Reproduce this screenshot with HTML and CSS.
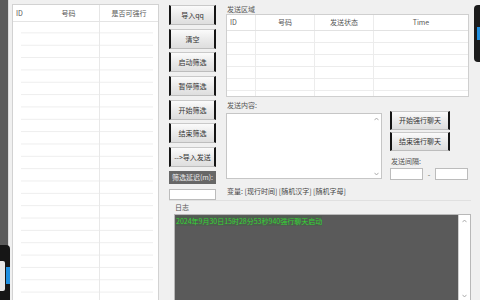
FILE: index.html
```html
<!DOCTYPE html>
<html lang="zh-CN">
<head>
<meta charset="utf-8">
<title>强行聊天</title>
<link rel="stylesheet" href="styles.css">
</head>
<body>
<div class="desk"></div>
<div class="win">
  <div class="list">
    <div class="list-head">
      <div class="lh lh-id">ID</div>
      <div class="lh lh-num">号码</div>
      <div class="lh lh-ok">是否可强行</div>
    </div>
    <div class="list-body"></div>
  </div>
  <div class="main">
    <div class="top">
      <div class="btns">
        <div class="btn">导入qq</div>
        <div class="btn">清空</div>
        <div class="btn">启动筛选</div>
        <div class="btn">暂停筛选</div>
        <div class="btn">开始筛选</div>
        <div class="btn">结束筛选</div>
        <div class="btn">--&gt;导入发送</div>
        <div class="delay-label">筛选延迟(m):</div>
        <div class="input delay-input"></div>
      </div>
      <div class="send">
        <div class="label">发送区域</div>
        <div class="stable">
          <div class="srow shead">
            <div class="sc sc-id">ID</div>
            <div class="sc">号码</div>
            <div class="sc">发送状态</div>
            <div class="sc">Time</div>
          </div>
          <div class="srow"><div class="sc"></div><div class="sc"></div><div class="sc"></div><div class="sc"></div></div>
          <div class="srow"><div class="sc"></div><div class="sc"></div><div class="sc"></div><div class="sc"></div></div>
          <div class="srow"><div class="sc"></div><div class="sc"></div><div class="sc"></div><div class="sc"></div></div>
          <div class="srow"><div class="sc"></div><div class="sc"></div><div class="sc"></div><div class="sc"></div></div>
          <div class="srow"><div class="sc"></div><div class="sc"></div><div class="sc"></div><div class="sc"></div></div>
          <div class="srow srow-last"><div class="sc"></div><div class="sc"></div><div class="sc"></div><div class="sc"></div></div>
        </div>
        <div class="label label-content">发送内容:</div>
        <div class="content-row">
          <div class="textbox">
            <div class="tb-text"></div>
            <div class="tb-scroll">
              <svg class="arr" width="5" height="4" viewBox="0 0 5 4"><path d="M0.5 3.2 L2.5 1 L4.5 3.2" fill="none" stroke="#9a9a9a" stroke-width="0.8"/></svg>
              <svg class="arr" width="5" height="4" viewBox="0 0 5 4"><path d="M0.5 0.8 L2.5 3 L4.5 0.8" fill="none" stroke="#9a9a9a" stroke-width="0.8"/></svg>
            </div>
          </div>
          <div class="side">
            <div class="btn btn-wide">开始强行聊天</div>
            <div class="btn btn-wide">结束强行聊天</div>
            <div class="label label-interval">发送间隔:</div>
            <div class="interval">
              <div class="input int-input"></div>
              <span class="dash">-</span>
              <div class="input int-input"></div>
            </div>
          </div>
        </div>
        <div class="vars">变量: [现行时间] [随机汉字] [随机字母]</div>
      </div>
    </div>
    <div class="log">
      <div class="log-label">日志</div>
      <div class="log-box">
        <div class="log-text"><span class="log-line">2024年9月30日15时28分53秒940强行聊天启动</span></div>
        <div class="log-scroll">
          <svg class="arr" width="5" height="4" viewBox="0 0 5 4"><path d="M0.5 3.2 L2.5 1 L4.5 3.2" fill="none" stroke="#9a9a9a" stroke-width="0.8"/></svg>
          <svg class="arr" width="5" height="4" viewBox="0 0 5 4"><path d="M0.5 0.8 L2.5 3 L4.5 0.8" fill="none" stroke="#9a9a9a" stroke-width="0.8"/></svg>
        </div>
      </div>
    </div>
  </div>
</div>
<div class="bezel-right"><div class="bezel-blue-r"></div></div>
<div class="bezel-left"><div class="bezel-white-l"></div><div class="bezel-blue-l"></div></div>
</body>
</html>
```

FILE: styles.css
```css
html, body {
  margin: 0;
  padding: 0;
}
body {
  width: 480px;
  height: 300px;
  overflow: hidden;
  display: flex;
  position: relative;
  background: #f0f0f0;
  font-family: "Noto Sans CJK SC", "Noto Sans", sans-serif;
  font-size: 7px;
  color: #444;
}
.desk {
  width: 8px;
  flex: none;
  background: #5b5b5b;
}
.win {
  flex: 1;
  display: flex;
  padding: 4px 0 0 3px;
  background: #f0f0f0;
  border-left: 1px solid #dcdcdc;
  box-sizing: border-box;
  height: 300px;
}
/* left list */
.list {
  width: 147px;
  height: 310px;
  flex: none;
  background: #fff;
  border: 1px solid #d2d2d2;
  box-sizing: border-box;
  display: flex;
  flex-direction: column;
}
.list-head {
  display: grid;
  grid-template-columns: 25px 62px 1fr;
  height: 16px;
  border-bottom: 1px solid #e4e4e4;
  flex: none;
}
.lh {
  line-height: 16px;
  text-align: center;
  color: #555;
}
.lh-id {
  text-align: left;
  padding-left: 3px;
}
.lh-num {
  border-right: 1px solid #e6e6e6;
}
.list-body {
  flex: 1;
  background:
    linear-gradient(to right, transparent 86px, #e8e8e8 86px, #e8e8e8 87px, transparent 87px) 0 0 / 100% 100% no-repeat,
    linear-gradient(to bottom, transparent 11px, #ededed 11px) 8px -1px / 132px 12.35px repeat-y;
}
/* main */
.main {
  width: 302px;
  margin-left: 10px;
  flex: none;
  display: flex;
  flex-direction: column;
}
.top {
  height: 196px;
  display: flex;
  flex: none;
}
.btns {
  width: 47px;
  flex: none;
  display: flex;
  flex-direction: column;
  gap: 3.7px;
  padding-top: 1px;
}
.btn {
  height: 20px;
  box-sizing: border-box;
  background: linear-gradient(to bottom, #fbfbfb, #e9e9e9 55%, #dedede);
  border-top: 1px solid #c9c9c9;
  border-bottom: 1px solid #bdbdbd;
  border-left: 2px solid #151515;
  border-right: 2px solid #151515;
  text-align: center;
  line-height: 18px;
  color: #333;
  white-space: nowrap;
}
.delay-label {
  margin-top: 0.3px;
  height: 13px;
  line-height: 13px;
  background: #676767;
  color: #ececec;
  text-align: center;
  white-space: nowrap;
}
.input {
  background: #fff;
  border: 1px solid #bcbcbc;
  box-sizing: border-box;
}
.delay-input {
  margin-top: 1.3px;
  height: 12px;
}
/* send area */
.send {
  width: 243px;
  margin-left: 10px;
  flex: none;
  display: flex;
  flex-direction: column;
}
.label {
  height: 10px;
  line-height: 10px;
  padding-left: 1px;
  color: #555;
}
.stable {
  height: 83px;
  background: #fff;
  border: 1px solid #cfcfcf;
  box-sizing: border-box;
  overflow: hidden;
}
.srow {
  display: grid;
  grid-template-columns: 29px 59px 59px 1fr;
  height: 12px;
  border-bottom: 1px solid #ececec;
  box-sizing: border-box;
}
.srow.shead {
  height: 16px;
  border-bottom: 1px solid #e2e2e2;
}
.srow-last {
  border-bottom: none;
}
.sc {
  border-right: 1px solid #ececec;
  text-align: center;
  line-height: 15px;
  color: #555;
}
.sc:last-child {
  border-right: none;
}
.sc-id {
  text-align: left;
  padding-left: 3px;
}
.label-content {
  margin-top: 3px;
  height: 11px;
  line-height: 11px;
}
.content-row {
  display: flex;
  margin-top: 2px;
  align-items: flex-start;
}
.textbox {
  width: 156px;
  height: 66px;
  background: #fff;
  border: 1px solid #c6c6c6;
  box-sizing: border-box;
  display: flex;
}
.tb-text {
  flex: 1;
}
.tb-scroll, .log-scroll {
  width: 9px;
  display: flex;
  flex-direction: column;
  justify-content: space-between;
  align-items: center;
  padding: 3px 0 2px;
  box-sizing: border-box;
}
.arr {
  display: block;
}
.side {
  width: 78px;
  margin-left: 8px;
  margin-top: -2px;
  display: flex;
  flex-direction: column;
}
.btn-wide {
  width: 60px;
  height: 19px;
  line-height: 17px;
  margin-bottom: 2px;
}
.label-interval {
  margin-top: 3px;
  height: 11px;
  line-height: 11px;
}
.interval {
  display: flex;
  align-items: center;
  margin-top: 1px;
}
.int-input {
  width: 33px;
  height: 12px;
}
.dash {
  width: 12px;
  text-align: center;
  color: #555;
}
.vars {
  margin-top: 6px;
  height: 10px;
  line-height: 10px;
  padding-left: 1px;
  color: #444;
  white-space: nowrap;
}
/* log */
.log {
  flex: 1;
  border-top: 1px solid #e0e0e0;
  padding-left: 5px;
  display: flex;
  flex-direction: column;
}
.log-label {
  height: 13px;
  line-height: 13px;
  padding-left: 1px;
  color: #555;
  flex: none;
}
.log-box {
  flex: 1;
  display: flex;
  border: 1px solid #b8b8b8;
  border-bottom: none;
  box-sizing: border-box;
  background: #5a5a5a;
}
.log-text {
  flex: 1;
  padding: 1px 0 0 1px;
  line-height: 10px;
}
.log-line {
  color: #34d634;
  background: #4f5d4f;
  white-space: nowrap;
}
.log-scroll {
  width: 12px;
  background: #fff;
  border-left: 1px solid #d0d0d0;
  padding: 4px 0 2px;
}
/* desktop bezels overlapping the window edges */
.bezel-right {
  position: absolute;
  left: 474px;
  top: 5px;
  width: 8px;
  height: 57px;
  background: #1b1b1b;
  border-radius: 4px 0 0 4px;
}
.bezel-blue-r {
  position: absolute;
  left: 3px;
  top: 22px;
  width: 5px;
  height: 13px;
  background: #1f8fe0;
}
.bezel-left {
  position: absolute;
  left: 0;
  top: 245px;
  width: 10px;
  height: 60px;
  background: #161616;
  border-radius: 0 4px 0 0;
}
.bezel-white-l {
  position: absolute;
  left: 0;
  top: 16px;
  width: 5px;
  height: 30px;
  background: #e8e8e8;
  border-radius: 0 2px 2px 0;
}
.bezel-blue-l {
  position: absolute;
  left: 6px;
  top: 22px;
  width: 4px;
  height: 17px;
  background: #1f8fe0;
}
```
